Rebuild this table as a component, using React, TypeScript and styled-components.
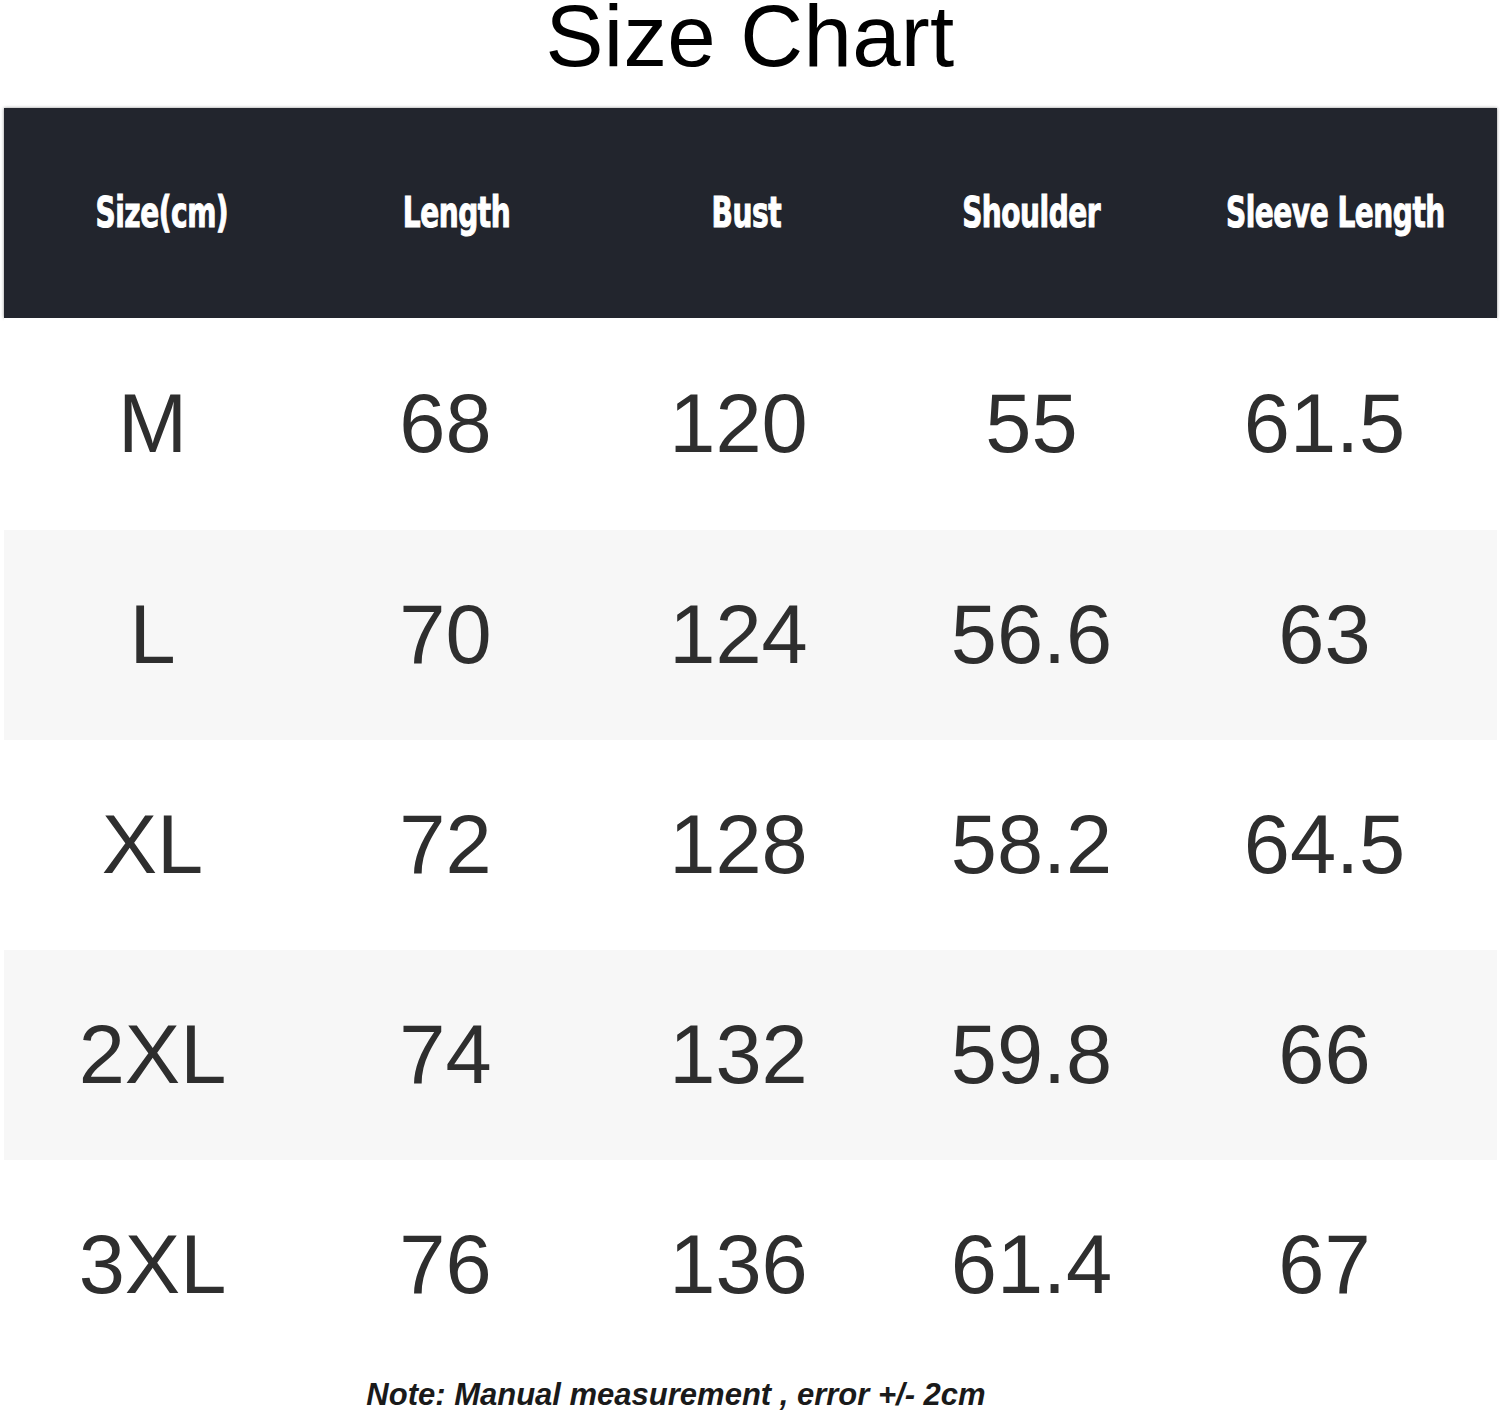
import React from "react";
import styled, { createGlobalStyle } from "styled-components";

const GlobalStyle = createGlobalStyle`
  html, body {
    margin: 0;
    padding: 0;
    background: #ffffff;
  }
  body {
    font-family: "Liberation Sans", Arial, sans-serif;
  }
`;

// 표 데이터
const headers = [
  { label: "Size(cm)", shift: 9 },
  { label: "Length", shift: 11 },
  { label: "Bust", shift: 8 },
  { label: "Shoulder", shift: -3 },
  { label: "Sleeve Length", shift: 11 },
];

const rows = [
  ["M", "68", "120", "55", "61.5"],
  ["L", "70", "124", "56.6", "63"],
  ["XL", "72", "128", "58.2", "64.5"],
  ["2XL", "74", "132", "59.8", "66"],
  ["3XL", "76", "136", "61.4", "67"],
];

const App = () => {
  return (
    <Page>
      <GlobalStyle />
      <Title>Size Chart</Title>

      <Table>
        {/* 헤더 */}
        <HeaderRow>
          {headers.map((h) => (
            <HeaderCell key={h.label} $shift={h.shift}>
              <span>{h.label}</span>
            </HeaderCell>
          ))}
        </HeaderRow>

        {/* 사이즈 행 */}
        {rows.map((row, i) => (
          <DataRow key={row[0]} $striped={i % 2 === 1} $first={i === 0}>
            {row.map((value, j) => (
              <DataCell key={j}>{value}</DataCell>
            ))}
          </DataRow>
        ))}
      </Table>

      <Note>Note: Manual measurement , error +/- 2cm</Note>
    </Page>
  );
};

export default App;

const Page = styled.div`
  width: 1500px;
  height: 1413px;
  display: flex;
  flex-direction: column;
  overflow: hidden;
  background: #ffffff;
`;

const Title = styled.h1`
  margin: 0;
  flex-shrink: 0;
  height: 108px;
  display: flex;
  justify-content: center;
  align-items: flex-start;
  font-family: "Liberation Sans", Arial, sans-serif;
  font-weight: 400;
  font-size: 87px;
  line-height: 72px;
  color: #000000;
  letter-spacing: 0.3px;
`;

const Table = styled.div`
  flex-shrink: 0;
  display: flex;
  flex-direction: column;
  margin: 0 3px 0 4px;
`;

const HeaderRow = styled.div`
  display: grid;
  grid-template-columns: repeat(5, 293px);
  padding-left: 2px;
  height: 210px;
  background: #22252d;
  box-shadow: 0 0 3px rgba(0, 0, 0, 0.45);
  align-items: center;
`;

const HeaderCell = styled.div<{ $shift: number }>`
  display: flex;
  justify-content: center;
  padding-left: ${(p) => p.$shift * 2}px;
  color: #ffffff;
  font-family: "DejaVu Sans Condensed", "Liberation Sans", sans-serif;
  font-weight: 700;
  font-size: 38px;
  letter-spacing: -0.6px;
  white-space: nowrap;
  -webkit-text-stroke: 0.9px #ffffff;

  span {
    display: inline-block;
    transform: scale(0.82, 1.1);
  }
`;

const DataRow = styled.div<{ $striped: boolean; $first: boolean }>`
  display: grid;
  grid-template-columns: repeat(5, 293px);
  padding-left: 2px;
  height: ${(p) => (p.$first ? 212 : 210)}px;
  align-items: center;
  background: ${(p) => (p.$striped ? "#f7f7f7" : "#ffffff")};
`;

const DataCell = styled.div`
  text-align: center;
  font-family: "Liberation Sans", Arial, sans-serif;
  font-size: 83px;
  color: #2e2e2e;
  line-height: 1;
  padding-bottom: 2px;
`;

const Note = styled.div`
  flex: 1;
  min-height: 0;
  display: flex;
  align-items: center;
  justify-content: center;
  padding-right: 148px;
  padding-top: 6px;
  font-family: "Liberation Sans", Arial, sans-serif;
  font-style: italic;
  font-weight: 700;
  font-size: 31px;
  line-height: 34px;
  color: #1a1a1a;
`;
